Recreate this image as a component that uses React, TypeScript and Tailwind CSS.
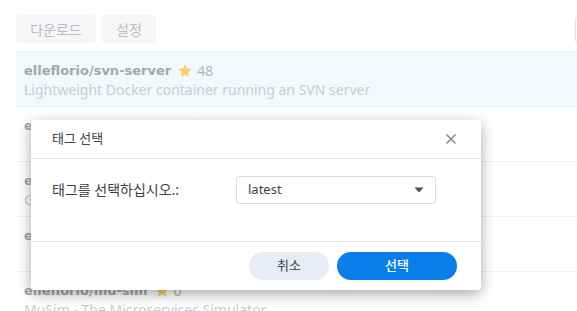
import { X } from "lucide-react";

const rows = [
  { name: "elleflorio/svn-server", stars: 48, desc: "Lightweight Docker container running an SVN server" },
  { name: "elleflorio/svn-webdav", stars: 3, desc: "" },
  { name: "elleflorio/go-svn", stars: 1, desc: "Go wrapper for svn command line" },
  { name: "elleflorio/svn-client", stars: 0, desc: "" },
  { name: "elleflorio/mu-sim", stars: 0, desc: "MuSim - The Microservices Simulator" },
];

function Star() {
  return (
    <svg width="16" height="16" viewBox="0 0 24 24" className="mr-[4px]">
      <path
        d="M12 2l3 6.3 6.8.8-5 4.7 1.3 6.8L12 17.2l-6.1 3.4 1.3-6.8-5-4.7 6.8-.8z"
        fill="#f8d266"
      />
    </svg>
  );
}

export default function App() {
  return (
    <div className="relative h-[311px] w-[577px] overflow-hidden bg-white font-['Noto_Sans','Noto_Sans_CJK_KR',sans-serif]">
      <div className="flex items-center justify-between pl-[16px] pt-[15px]">
        <div className="flex gap-[6px]">
          <button className="h-[28px] w-[80px] rounded-[3px] bg-[#f5f6f8] text-[14px] text-[#b9bdc2]">
            다운로드
          </button>
          <button className="h-[28px] w-[54px] rounded-[3px] bg-[#f5f6f8] text-[14px] text-[#b9bdc2]">
            설정
          </button>
        </div>
        <div className="-mr-[20px] h-[27px] w-[22px] rounded-[3px] border border-[#dfe3e8]" />
      </div>

      <div className="ml-[16px] mt-[8px] border-t border-[#edf0f3]">
        {rows.map((r, i) => (
          <div
            key={r.name}
            className={
              "flex h-[55px] flex-col border-b border-[#edf0f3] px-[8px] pt-[9px] " +
              (i === 0 ? "bg-[#f3f8fc]" : "bg-white")
            }
          >
            <div className="flex h-[19px] items-center">
              <span className="font-['DejaVu_Sans',sans-serif] text-[13px] font-bold text-[#a3a7ac]">
                {r.name}
              </span>
              <span className="ml-[6px] flex items-center text-[14px] text-[#b3b7bc]">
                <Star />
                {r.stars}
              </span>
            </div>
            <div className="h-[19px] text-[14px] leading-[19px] text-[#c9cdd1]">{r.desc}</div>
          </div>
        ))}
      </div>

      <div className="absolute left-[31px] top-[120px] flex h-[170px] w-[450px] flex-col rounded-[4px] bg-white shadow-[0_4px_14px_rgba(0,0,0,0.35)]">
        <div className="flex h-[39px] items-center justify-between border-b border-[#e3e8ee] pl-[21px] pr-[22px]">
          <span className="text-[13px] text-[#3c4148]">태그 선택</span>
          <X size={16} strokeWidth={2.6} className="text-[#8a8f96]" />
        </div>
        <div className="flex h-[83px] items-start border-b border-[#e3e8ee] pl-[21px] pt-[17px]">
          <span className="mt-[3px] w-[184px] text-[14px] text-[#3c4148]">태그를 선택하십시오.:</span>
          <div className="flex h-[28px] w-[200px] items-center justify-between rounded-[3px] border border-[#d7dde4] pl-[11px] pr-[11px]">
            <span className="text-[13px] text-[#3c4148]">latest</span>
            <svg width="10" height="6" viewBox="0 0 10 6">
              <path d="M0.5 0.5h9L5 5.5z" fill="#4b5058" />
            </svg>
          </div>
        </div>
        <div className="flex flex-1 items-center justify-end gap-[8px] pr-[24px]">
          <button className="h-[28px] w-[80px] rounded-full bg-[#e8ecf3] text-[13px] text-[#3c4148]">
            취소
          </button>
          <button className="h-[28px] w-[120px] rounded-full bg-[#0a7ee8] text-[13px] font-medium text-white">
            선택
          </button>
        </div>
      </div>
    </div>
  );
}
